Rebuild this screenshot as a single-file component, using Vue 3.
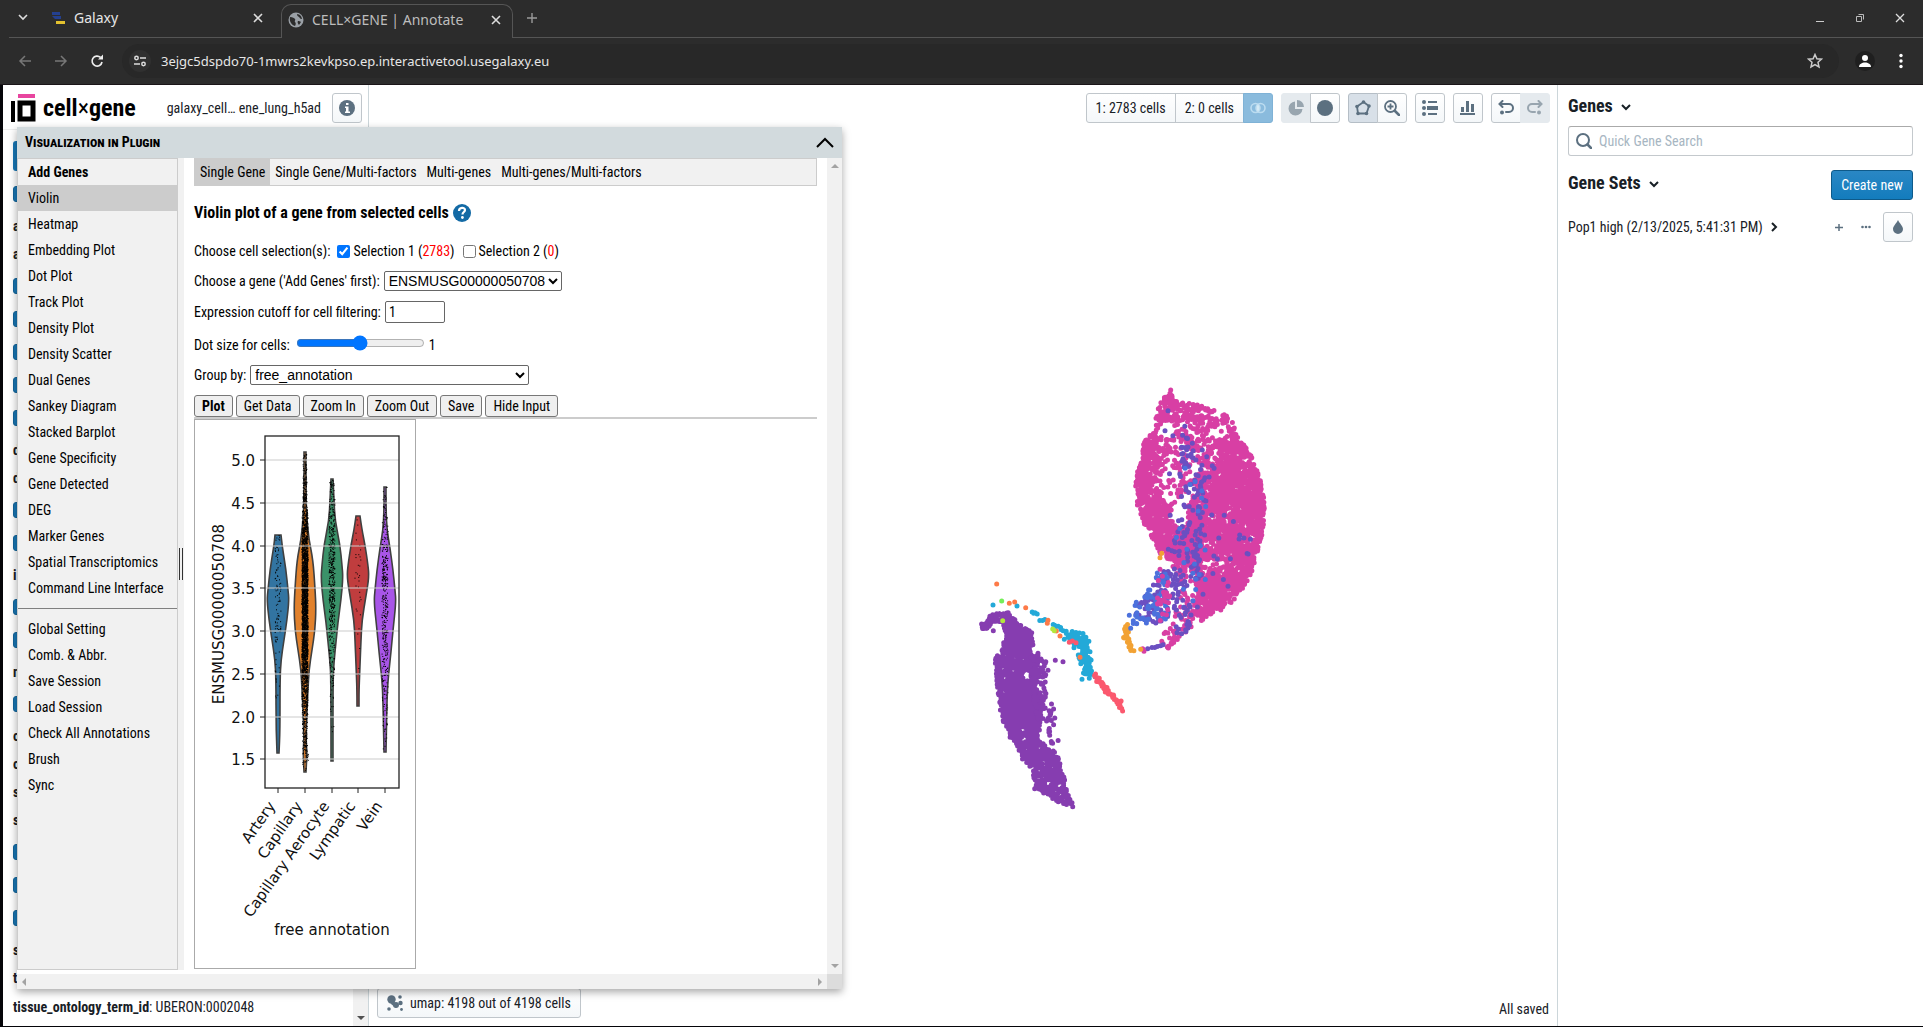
<script setup>
import { ref } from 'vue'

const plugins = [
  'Violin', 'Heatmap', 'Embedding Plot', 'Dot Plot', 'Track Plot', 'Density Plot', 'Density Scatter',
  'Dual Genes', 'Sankey Diagram', 'Stacked Barplot', 'Gene Specificity', 'Gene Detected', 'DEG',
  'Marker Genes', 'Spatial Transcriptomics', 'Command Line Interface'
]
const settings = ['Global Setting', 'Comb. & Abbr.', 'Save Session', 'Load Session', 'Check All Annotations', 'Brush', 'Sync']
const tabs = ['Single Gene', 'Single Gene/Multi-factors', 'Multi-genes', 'Multi-genes/Multi-factors']
const actions = ['Plot', 'Get Data', 'Zoom In', 'Zoom Out', 'Save', 'Hide Input']

// category rows of the left sidebar: a number is a run of tick boxes, an array a run of plain names
const categories = [1, ['a', 'a'], 5, ['d', 'd'], 2, ['i'], 2, ['n'], 1, ['o', 'o', 's', 's'], 3, ['s', 't']]

const sel1 = ref(true)
const sel2 = ref(false)
const cutoff = ref('1')
const dotSize = ref(1)
const search = ref('')

function generator(seed) {
  let a = seed
  return () => {
    a = (a + 0x6d2b79f5) | 0
    let t = Math.imul(a ^ (a >>> 15), 1 | a)
    t = (t + Math.imul(t ^ (t >>> 7), 61 | t)) ^ t
    return ((t ^ (t >>> 14)) >>> 0) / 4294967296
  }
}
const rnd = generator(20250213)
const gauss = () => rnd() + rnd() + rnd() - 1.5

// ---- violin plot ----
const ticks = [5, 4.5, 4, 3.5, 3, 2.5, 2, 1.5]
const ty = (v) => Math.round(40 + (5 - v) * 85.5)
const groups = [
  { name: 'Artery', x: 83, fill: '#3274a1', n: 120, mid: 178, sd: 62, shape: [[115, 3], [125, 4], [150, 8], [170, 10], [180, 11], [200, 9], [220, 6], [240, 3], [260, 2], [310, 2], [333, 1]] },
  { name: 'Capillary', x: 110, fill: '#e1812c', n: 3000, mid: 186, sd: 84, shape: [[32, 1], [80, 1], [100, 2], [120, 4], [140, 8], [168, 10], [188, 11], [210, 10], [230, 7], [250, 4], [270, 3], [290, 2], [320, 1], [332, 2], [352, 1]] },
  { name: 'Capillary Aerocyte', x: 137, fill: '#3a9269', n: 560, mid: 155, sd: 80, shape: [[59, 1], [80, 2], [100, 3], [125, 8], [145, 10], [158, 11], [180, 9], [202, 6], [222, 4], [242, 2], [260, 1], [341, 1]] },
  { name: 'Lympatic', x: 163, fill: '#c03d3e', n: 45, mid: 155, sd: 70, shape: [[96, 2], [110, 4], [125, 7], [145, 10], [157, 11], [176, 8], [200, 4], [220, 3], [245, 2], [270, 1], [286, 1]] },
  { name: 'Vein', x: 190, fill: '#a855e8', n: 420, mid: 185, sd: 85, shape: [[67, 1], [90, 1], [110, 2], [128, 5], [150, 8], [170, 10], [182, 11], [210, 8], [232, 6], [260, 3], [280, 2], [332, 1]] }
]
function half(shape, y) {
  for (let i = 1; i < shape.length; i++) {
    const [y0, w0] = shape[i - 1]
    const [y1, w1] = shape[i]
    if (y <= y1) return w0 + ((w1 - w0) * (y - y0)) / (y1 - y0)
  }
  return 1
}
const violins = groups.map((g) => {
  const edge = (s) => g.shape.map(([y, w]) => [g.x + s * w, y])
  const run = (pts) => {
    let d = ''
    for (let i = 1; i < pts.length - 1; i++) {
      d += `Q${pts[i][0]} ${pts[i][1]} ${(pts[i][0] + pts[i + 1][0]) / 2} ${(pts[i][1] + pts[i + 1][1]) / 2}`
    }
    const e = pts[pts.length - 1]
    return d + `L${e[0]} ${e[1]}`
  }
  const r = edge(1)
  const l = edge(-1).reverse()
  let dots = ''
  const lo = g.shape[0][0]
  const hi = g.shape[g.shape.length - 1][0]
  for (let i = 0; i < g.n; i++) {
    const y = g.mid + gauss() * g.sd * 1.5
    if (y < lo || y > hi) continue
    const w = Math.min(3, half(g.shape, y) + 1)
    dots += `M${(g.x - 0.5 + (rnd() * 2 - 1) * w).toFixed(1)} ${y.toFixed(1)}h1`
  }
  if (g.name === 'Capillary') for (let i = 0; i < 40; i++) dots += `M${(g.x + (rnd() * 2 - 1) * 3).toFixed(1)} ${(310 + rnd() * 34).toFixed(1)}h1`
  return { ...g, d: `M${r[0][0]} ${r[0][1]}${run(r)}L${l[0][0]} ${l[0][1]}${run(l)}Z`, dots }
})

// ---- embedding: cells drawn as small round dots, one path for each colour ----
const PINK = '#d83fa4'
const INDIGO = '#6b4fc1'
const BLUE = '#4c71dc'
const ORANGE = '#f2a234'
const PURPLE = '#863db0'
const CYAN = '#23a9d8'
const RED = '#fb586e'
const CORAL = '#fd7a48'
const layers = []
function layer(color) {
  const l = { color, d: '' }
  layers.push(l)
  return l
}
const put = (l, x, y) => { l.d += `M${x.toFixed(1)} ${y.toFixed(1)}h0` }
function inside(p, x, y) {
  let c = false
  for (let i = 0, j = p.length - 1; i < p.length; j = i++) {
    if (p[i][1] > y !== p[j][1] > y && x < ((p[j][0] - p[i][0]) * (y - p[i][1])) / (p[j][1] - p[i][1]) + p[i][0]) c = !c
  }
  return c
}
function fill(color, poly, n, keep = () => 1) {
  const l = layer(color)
  const xs = poly.map((p) => p[0])
  const ys = poly.map((p) => p[1])
  const x0 = Math.min(...xs), x1 = Math.max(...xs), y0 = Math.min(...ys), y1 = Math.max(...ys)
  let k = 0
  for (let t = 0; k < n && t < n * 20; t++) {
    const x = x0 + rnd() * (x1 - x0)
    const y = y0 + rnd() * (y1 - y0)
    if (!inside(poly, x, y) || rnd() > keep(x, y)) continue
    put(l, x, y)
    k++
  }
}
function trail(color, pts, step, spread) {
  const l = layer(color)
  for (let i = 1; i < pts.length; i++) {
    const [ax, ay] = pts[i - 1]
    const [bx, by] = pts[i]
    const n = Math.max(1, Math.round(Math.hypot(bx - ax, by - ay) / step))
    for (let k = 0; k < n; k++) put(l, ax + ((bx - ax) * k) / n + gauss() * spread, ay + ((by - ay) * k) / n + gauss() * spread)
  }
}
const dotsAt = (color, pts) => { const l = layer(color); pts.forEach(([x, y]) => put(l, x, y)) }
const at = (ox, oy, pts) => pts.map(([x, y]) => [ox + x / 3, oy + y / 3])
const east = (pts) => at(731, 285, pts)
const west = (pts) => at(591, 475, pts)
const near = (x, y, cx, cy, rx, ry) => ((x - cx) / rx) ** 2 + ((y - cy) / ry) ** 2 < 1

fill(PINK, east([[212, 60], [222, 92], [250, 90], [290, 98], [330, 118], [375, 130], [402, 160], [414, 205], [436, 224], [459, 270], [480, 325], [494, 400], [490, 480], [477, 535], [459, 600], [428, 658], [388, 708], [332, 736], [268, 776], [232, 812], [205, 832], [170, 822], [200, 780], [235, 700], [235, 640], [215, 580], [180, 550], [160, 510], [134, 464], [110, 400], [106, 330], [122, 270], [132, 210], [162, 185], [168, 130], [186, 88]]), 3300, (px, py) => {
  const x = (px - 731) * 3
  const y = (py - 285) * 3
  if (near(x, y, 240, 430, 24, 44) || near(x, y, 200, 178, 24, 24) || near(x, y, 364, 184, 24, 22)) return 0
  if (near(x, y, 340, 582, 44, 12)) return 0.08
  if (near(x, y, 235, 320, 58, 100)) return 0.18
  if (near(x, y, 265, 230, 95, 90)) return 0.36
  if (x < 290 && y > 600) return 0.25
  if (y > 740) return 0.5
  if (y < 200) return 0.55
  return 1
})
dotsAt(PINK, east([[212, 60], [210, 70], [207, 78], [216, 82], [200, 84], [364, 184], [388, 184], [240, 122], [236, 380], [224, 397], [215, 402]]))
fill(INDIGO, east([[245, 190], [270, 190], [300, 290], [325, 340], [320, 400], [300, 500], [300, 620], [250, 700], [220, 650], [215, 500], [250, 430], [235, 300]]), 105)
trail(INDIGO, east([[252, 280], [256, 298]]), 1, 3)
fill(INDIGO, east([[205, 120], [350, 225], [360, 400], [460, 460], [450, 590], [400, 640], [340, 700], [230, 740], [200, 500], [210, 250]]), 52)
fill(INDIGO, east([[185, 595], [225, 600], [245, 660], [215, 740], [170, 760], [130, 750], [95, 745], [120, 690], [160, 640]]), 80)
fill(BLUE, east([[180, 590], [205, 600], [200, 660], [215, 720], [185, 765], [125, 765], [90, 770], [88, 720], [115, 690], [150, 640]]), 70)
fill(BLUE, east([[225, 270], [330, 290], [350, 430], [320, 680], [240, 790], [200, 500], [255, 450]]), 24)
fill(INDIGO, east([[255, 700], [300, 690], [270, 780], [205, 830], [190, 790]]), 20)
fill(PINK, east([[175, 600], [210, 640], [215, 760], [175, 790], [165, 690]]), 22)
trail(INDIGO, east([[145, 836], [165, 832], [200, 824]]), 3, 1)
dotsAt(PINK, east([[128, 836], [132, 844], [180, 598], [205, 834]]))
dotsAt(INDIGO, east([[195, 182], [204, 122]]))
trail(ORANGE, east([[82, 768], [76, 790], [80, 815], [92, 834], [105, 838]]), 1, 3)
dotsAt(ORANGE, east([[180, 563], [185, 550], [122, 838]]))
dotsAt(BLUE, east([[88, 736], [92, 775], [100, 752]]))

fill(PURPLE, west([[64, 210], [60, 202], [82, 185], [98, 158], [145, 156], [172, 185], [192, 203], [216, 215], [219, 260], [214, 290], [236, 278], [233, 330], [224, 380], [240, 420], [240, 500], [234, 540], [264, 560], [290, 578], [305, 620], [318, 680], [338, 740], [290, 724], [265, 707], [224, 692], [218, 640], [184, 592], [169, 550], [147, 530], [124, 470], [114, 400], [108, 340], [101, 300], [127, 270], [137, 215], [122, 185], [98, 188], [80, 206]]), 1750, (px, py) => {
  const x = (px - 591) * 3
  const y = (py - 475) * 3
  if (near(x, y, 200, 345, 12, 14) || near(x, y, 190, 540, 14, 6)) return 0
  return y > 560 ? 0.7 : 1
})
trail(PURPLE, west([[64, 203], [80, 195], [98, 170]]), 1, 3)
dotsAt(PURPLE, west([[328, 722], [334, 732], [338, 740], [336, 728]]))
fill(PURPLE, west([[212, 275], [260, 305], [255, 385], [280, 440], [294, 490], [298, 550], [262, 550], [262, 490], [230, 480], [215, 400]]), 115)
dotsAt(PURPLE, west([[286, 301], [309, 305], [100, 212], [365, 300], [252, 307], [264, 331]]))
trail(CYAN, west([[215, 155], [238, 164]]), 2, 1)
trail(CYAN, west([[242, 180], [258, 182]]), 2, 1)
trail(CYAN, west([[278, 192], [300, 204], [312, 216]]), 2, 1)
trail(CYAN, west([[322, 226], [345, 232], [365, 245], [372, 280], [380, 310], [384, 340]]), 0.4, 6)
dotsAt(CYAN, west([[99, 135], [171, 138], [342, 263], [366, 358], [388, 355], [405, 350], [413, 362], [390, 275]]))
trail(RED, west([[402, 346], [420, 366], [440, 392], [462, 416], [480, 434], [488, 450]]), 1, 2)
dotsAt(RED, west([[328, 247], [337, 243], [348, 248]]))
dotsAt(CORAL, west([[110, 72], [148, 130], [164, 126], [197, 143], [264, 181], [262, 190], [289, 213], [300, 228], [360, 292]]))
dotsAt('#74ee58', west([[125, 123]]))
dotsAt('#b3e63c', west([[128, 182], [278, 207], [283, 212]]))
</script>

<template>
  <div class="window">
    <header class="chrome">
      <div class="tabstrip">
        <button class="bare tabsearch" aria-label="Search tabs"><svg width="10" height="10" viewBox="0 0 10 10"><path d="M1 3l4 4 4-4" class="w2" /></svg></button>
        <div class="btab">
          <svg width="14" height="14" viewBox="0 0 14 14"><path d="M1 1h8v3H1zM1 5h9v3H4z" fill="#24408f" /><path d="M5 10h9v3H5z" fill="#e3c12f" /></svg>
          <span class="btitle">Galaxy</span>
          <button class="bare" aria-label="Close tab"><svg width="10" height="10" viewBox="0 0 10 10"><path d="M1 1l8 8M9 1l-8 8" class="w2" /></svg></button>
        </div>
        <div class="btab current">
          <svg width="16" height="16" viewBox="0 0 16 16"><circle cx="8" cy="8" r="7.500" fill="#9aa0a6" /><path d="M2 5c3 0 4 1 5 2s-1 2 0 3 1 2 0 4c-3-1-6-4-5-9zM9 2c0 2 1 2 2 3s1 2 3 2c0-2-2-5-5-5zM10 9c1 0 2 0 3 1l-2 3c-1-1-2-3-1-4z" fill="#2c2c2c" /></svg>
          <span class="btitle">CELL×GENE | Annotate</span>
          <button class="bare" aria-label="Close tab"><svg width="10" height="10" viewBox="0 0 10 10"><path d="M1 1l8 8M9 1l-8 8" class="w2" /></svg></button>
        </div>
        <button class="bare newtab" aria-label="New tab"><svg width="12" height="12" viewBox="0 0 12 12"><path d="M6 1v10M1 6h10" stroke="#9a9a9a" stroke-width="1.4" /></svg></button>
        <div class="winbtns">
          <button class="bare" aria-label="Minimise"><svg width="10" height="10" viewBox="0 0 10 10"><path d="M1 8.500h8" stroke="#ccc" /></svg></button>
          <button class="bare" aria-label="Restore"><svg width="10" height="10" viewBox="0 0 10 10"><path d="M1.500 3.500h5v5h-5zM3.500 1.500h5v5" fill="none" stroke="#bbb" /></svg></button>
          <button class="bare" aria-label="Close window"><svg width="10" height="10" viewBox="0 0 10 10"><path d="M1 1l8 8M9 1l-8 8" stroke="#ddd" stroke-width="1.300" /></svg></button>
        </div>
      </div>
      <div class="toolbar">
        <button class="bare" aria-label="Back"><svg width="14" height="14" viewBox="0 0 14 14"><path d="M13 7H2M7 2L2 7l5 5" fill="none" stroke="#777" stroke-width="1.500" /></svg></button>
        <button class="bare" aria-label="Forward"><svg width="14" height="14" viewBox="0 0 14 14"><path d="M1 7h11M7 2l5 5-5 5" fill="none" stroke="#777" stroke-width="1.500" /></svg></button>
        <button class="bare" aria-label="Reload"><svg width="14" height="14" viewBox="0 0 14 14"><path d="M12 8a5 5 0 1 1-1.500-4.600" fill="none" stroke="#eee" stroke-width="1.700" /><path d="M8 5.500h5v-5z" fill="#eee" /></svg></button>
        <div class="omnibox">
          <span class="tune"><svg width="14" height="14" viewBox="0 0 14 14" fill="none" stroke="#ddd" stroke-width="1.500"><circle cx="3.500" cy="4" r="1.700" /><path d="M7 4h6M1 10h6" /><circle cx="10.500" cy="10" r="1.700" /></svg></span>
          <span class="url">3ejgc5dspdo70-1mwrs2kevkpso.ep.interactivetool.usegalaxy.eu</span>
          <svg width="16" height="16" viewBox="0 0 16 16"><path d="M8 1.500l1.900 4.300 4.600.4-3.500 3.100 1 4.600-4-2.400-4 2.400 1-4.600L1.500 6.200l4.600-.4z" fill="none" stroke="#ccc" stroke-width="1.500" /></svg>
        </div>
        <button class="bare avatar" aria-label="Profile"><svg width="20" height="20" viewBox="0 0 20 20"><circle cx="10" cy="10" r="10" fill="#1f1f1f" /><circle cx="10" cy="7" r="3" fill="#fff" /><path d="M4 16c0-6 12-6 12 0z" fill="#fff" /></svg></button>
        <button class="bare" aria-label="Menu"><svg width="4" height="16" viewBox="0 0 4 16" fill="#fff"><circle cx="2" cy="2.500" r="1.700" /><circle cx="2" cy="8" r="1.700" /><circle cx="2" cy="13.500" r="1.700" /></svg></button>
      </div>
    </header>

    <div class="page">
      <aside class="left">
        <div class="brand">
          <svg width="28" height="28" viewBox="0 0 28 28"><path d="M7 0h17v4H7z" fill="#e8459f" /><path d="M0 7h4v21H0z" /><path d="M9 9h13v16H9z" fill="none" stroke="#000" stroke-width="5" /></svg>
          <strong class="logo">cell<span class="times">×</span>gene</strong>
          <span class="dataset">galaxy_cell… ene_lung_h5ad</span>
          <button class="bp" aria-label="Info"><svg width="16" height="16" viewBox="0 0 16 16"><circle cx="8" cy="8" r="8" fill="#5c7080" /><path d="M7 3h2.500v2H7zM6 6.500h3.500v5H11V13H6v-1.500h1v-3.500H6z" fill="#fff" /></svg></button>
        </div>
        <div class="cats">
          <div class="catbtn"></div>
          <template v-for="(run, i) in categories" :key="i">
            <div v-if="Array.isArray(run)" class="names"><div v-for="(n, k) in run" :key="k">{{ n }}</div></div>
            <template v-else><div v-for="k in run" :key="k" class="catrow"><i></i></div></template>
          </template>
          <div class="last"><b>tissue_ontology_term_id</b>: UBERON:0002048</div>
        </div>
        <div class="lscroll"><i class="tri down dark"></i></div>
      </aside>

      <main class="center">
        <svg class="embedding" viewBox="0 0 1188 941" role="img" aria-label="umap">
          <path v-for="(l, i) in layers" :key="i" :d="l.d" :stroke="l.color" stroke-width="5" stroke-linecap="round" fill="none" />
        </svg>
        <div class="tools">
          <div class="grp">
            <button class="bp txt">1: 2783 cells</button><button class="bp txt">2: 0 cells</button>
            <button class="bp blue" aria-label="Differential expression"><svg width="16" height="16" viewBox="0 0 16 16"><circle cx="5.500" cy="8" r="4.500" fill="none" stroke="#bcdcf0" stroke-width="1.600" /><circle cx="10.500" cy="8" r="4.500" fill="none" stroke="#bcdcf0" stroke-width="1.600" /><path d="M8 4.200c2 2 2 5.600 0 7.600-2-2-2-5.600 0-7.600z" fill="#d5eaf6" /></svg></button>
          </div>
          <div class="grp">
            <button class="bp off" aria-label="Subset"><svg width="16" height="16" viewBox="0 0 16 16" fill="#98a5af"><path d="M7 1.500a7 7 0 1 0 7.500 7.500H7z" /><path d="M9 0a7 7 0 0 1 7 7H9z" /></svg></button>
            <button class="bp" aria-label="Undo subset"><svg width="16" height="16" viewBox="0 0 16 16"><circle cx="8" cy="8" r="8" fill="#5c7080" /></svg></button>
          </div>
          <div class="grp">
            <button class="bp on" aria-label="Lasso"><svg width="16" height="16" viewBox="0 0 16 16"><path d="M8.500 2L14 6l-2.500 7.500H3L2 6.500z" fill="none" stroke="#5c7080" stroke-width="1.800" /><g fill="#5c7080"><circle cx="8.500" cy="2" r="1.800" /><circle cx="14" cy="6" r="1.800" /><circle cx="11.500" cy="13.500" r="1.800" /><circle cx="3" cy="13.500" r="1.800" /><circle cx="2" cy="6.500" r="1.800" /></g></svg></button>
            <button class="bp" aria-label="Zoom"><svg width="16" height="16" viewBox="0 0 16 16" fill="none" stroke="#5c7080" stroke-width="1.800"><circle cx="6.500" cy="6.500" r="5.500" /><path d="M11 11l4 4" stroke-width="2.500" stroke-linecap="round" /><path d="M6.500 3.500v6M3.500 6.500h6" /></svg></button>
          </div>
          <button class="bp" aria-label="Layout"><svg width="16" height="16" viewBox="0 0 16 16" fill="#5c7080"><circle cx="2" cy="2" r="2" /><circle cx="2" cy="8" r="2" /><circle cx="2" cy="14" r="2" /><path d="M6 1h9v2H6zM5 6h11v4H5zM6 13h9v2H6z" /></svg></button>
          <button class="bp" aria-label="Statistics"><svg width="16" height="16" viewBox="0 0 16 16" fill="#5c7080"><path d="M0 13h15v2H0zM1 7h3v5H1zM6 1h3v11H6zM11 4h3v8h-3z" /></svg></button>
          <div class="grp">
            <button class="bp" aria-label="Undo"><svg width="16" height="16" viewBox="0 0 16 16"><path d="M4.500 1L1.500 4l3 3M2 4h9a4 4 0 0 1 0 8H8" fill="none" stroke="#5c7080" stroke-width="2" stroke-linecap="round" /><circle cx="4" cy="12.500" r="2" fill="#5c7080" /></svg></button>
            <button class="bp off" aria-label="Redo"><svg width="16" height="16" viewBox="0 0 16 16"><path d="M11.500 1l3 3-3 3M14 4H5a4 4 0 0 0 0 8h3" fill="none" stroke="#98a5af" stroke-width="2" stroke-linecap="round" /><circle cx="12" cy="12.500" r="2" fill="#98a5af" /></svg></button>
          </div>
        </div>
        <div class="status">
          <button class="bp umap"><svg width="16" height="16" viewBox="0 0 16 16" fill="#5c7080"><circle cx="4.500" cy="4.500" r="4.200" /><path d="M5 5l6 5-2 3-5-4z" /><circle cx="9" cy="10" r="3" /><circle cx="13" cy="2" r="1.800" /><circle cx="13.500" cy="8" r="2.200" /><circle cx="2" cy="14" r="1.800" /><circle cx="14.500" cy="14.500" r="1.400" /></svg>umap: 4198 out of 4198 cells</button>
          <span>All saved</span>
        </div>
      </main>

      <aside class="right">
        <h2>Genes <svg width="12" height="12" viewBox="0 0 12 12"><path d="M2 4l4 4 4-4" class="chev" /></svg></h2>
        <label class="search">
          <svg width="16" height="16" viewBox="0 0 16 16" fill="none" stroke="#5c7080" stroke-width="2"><circle cx="7" cy="7" r="6" /><path d="M11.500 11.500l3.500 3.500" stroke-width="2.500" stroke-linecap="round" /></svg>
          <input v-model="search" type="text" placeholder="Quick Gene Search" aria-label="Quick Gene Search" />
        </label>
        <div class="setshead">
          <h2>Gene Sets <svg width="12" height="12" viewBox="0 0 12 12"><path d="M2 4l4 4 4-4" class="chev" /></svg></h2>
          <button class="create">Create new</button>
        </div>
        <div class="setrow">
          <span>Pop1 high (2/13/2025, 5:41:31 PM)</span>
          <svg width="12" height="12" viewBox="0 0 12 12"><path d="M4 2l4 4-4 4" class="chev" /></svg>
          <span class="grow"></span>
          <button class="bare small" aria-label="Add gene"><svg width="10" height="10" viewBox="0 0 10 10"><path d="M5 2v7M1 5.500h8" stroke="#5c7080" stroke-width="1.500" /></svg></button>
          <button class="bare small" aria-label="More"><svg width="10" height="10" viewBox="0 0 10 10" fill="#5c7080"><circle cx="1.500" cy="5" r="1.300" /><circle cx="5" cy="5" r="1.300" /><circle cx="8.500" cy="5" r="1.300" /></svg></button>
          <button class="bp" aria-label="Colour by"><svg width="16" height="16" viewBox="0 0 16 16"><path d="M8 1c2 4 5 6 5 9a5 5 0 0 1-10 0c0-3 3-5 5-9z" fill="#5c7080" /></svg></button>
        </div>
      </aside>

      <section class="panel">
        <div class="phead">
          <strong>Visualization in Plugin</strong>
          <button class="bare" aria-label="Collapse"><svg width="18" height="12" viewBox="0 0 18 12"><path d="M1 10l8-8 8 8" fill="none" stroke="#000" stroke-width="2" /></svg></button>
        </div>
        <div class="pbody">
          <nav class="menu">
            <a href="#" class="add">Add Genes</a>
            <a v-for="p in plugins" :key="p" href="#" :class="{ active: p === 'Violin' }">{{ p }}</a>
            <hr />
            <a v-for="s in settings" :key="s" href="#">{{ s }}</a>
          </nav>
          <div class="splitter"><i></i></div>
          <div class="content">
            <nav class="tabs"><a v-for="(t, i) in tabs" :key="t" href="#" :class="{ active: i === 0 }">{{ t }}</a></nav>
            <h3>Violin plot of a gene from selected cells
              <svg width="18" height="18" viewBox="0 0 18 18"><circle cx="9" cy="9" r="9" fill="#136aa5" /><path d="M6 7c0-4 6-4 6-1 0 2-2.500 2-2.500 4.500" fill="none" stroke="#fff" stroke-width="2.200" /><circle cx="9.400" cy="13.500" r="1.400" fill="#fff" /></svg>
            </h3>
            <div class="row r30">
              <span class="lead">Choose cell selection(s):</span>
              <label class="tick"><input v-model="sel1" type="checkbox" />Selection 1 (<em>2783</em>)</label>
              <label class="tick"><input v-model="sel2" type="checkbox" />Selection 2 (<em>0</em>)</label>
            </div>
            <div class="row r30">
              <label for="gene">Choose a gene ('Add Genes' first):</label>
              <select id="gene"><option>ENSMUSG00000050708</option></select>
            </div>
            <div class="row r32">
              <label for="cut">Expression cutoff for cell filtering:</label>
              <input id="cut" v-model="cutoff" type="text" />
            </div>
            <div class="row r34">
              <label for="dot">Dot size for cells:</label>
              <input id="dot" v-model="dotSize" type="range" min="0" max="2" step="1" /><span>1</span>
            </div>
            <div class="row r26">
              <label for="by">Group by:</label>
              <select id="by" class="wide"><option>free_annotation</option></select>
            </div>
            <div class="actions"><button v-for="(a, i) in actions" :key="a" :class="{ bold: i === 0 }">{{ a }}</button></div>
            <figure class="plot">
              <svg width="220" height="548" viewBox="0 0 220 548">
                <g v-for="v in violins" :key="v.name">
                  <path :d="v.d" :fill="v.fill" stroke="#404040" stroke-width="1.600" />
                  <path :d="v.dots" stroke="#000" stroke-width="1" />
                </g>
                <path v-for="t in ticks" :key="t" :d="`M70 ${ty(t)}H204`" stroke="#ccc" stroke-width="1.200" />
                <rect x="70" y="16" width="134" height="352" fill="none" stroke="#222" stroke-width="1.300" />
                <g v-for="t in ticks" :key="t">
                  <path :d="`M65 ${ty(t)}h5`" stroke="#222" />
                  <text x="60" :y="ty(t) + 6" text-anchor="end">{{ t.toFixed(1) }}</text>
                </g>
                <g v-for="v in violins" :key="v.name">
                  <path :d="`M${v.x} 368v5`" stroke="#222" />
                  <text :transform="`translate(${v.x - 2} 386) rotate(-55)`" text-anchor="end">{{ v.name }}</text>
                </g>
                <text transform="translate(29 194) rotate(-90)" text-anchor="middle">ENSMUSG00000050708</text>
                <text x="137" y="515" text-anchor="middle">free annotation</text>
              </svg>
            </figure>
          </div>
          <div class="vscroll"><i class="tri up"></i><i class="tri down"></i></div>
        </div>
        <div class="hscroll"><i class="tri toleft"></i><i class="tri toright"></i><span class="corner"></span></div>
      </section>
    </div>
  </div>
</template>

<style>
body { margin: 0; background: #0b0b0f; }
</style>

<style scoped>
* { box-sizing: border-box; }
.window { height: 100vh; display: flex; flex-direction: column; padding: 0 0 1px 3px; background: #050509; overflow: hidden; font: 14px/18px "Roboto Condensed", "Liberation Sans Narrow", Roboto, sans-serif; color: #182026; }
.bare { background: none; border: 0; padding: 0; display: flex; align-items: center; justify-content: center; }
svg { display: block; flex: none; }
.w2 { fill: none; stroke: #ddd; stroke-width: 1.600; }
.chev { fill: none; stroke: #182026; stroke-width: 2; }
.chrome { flex: none; background: #2c2c2c; font: 14px/20px "Noto Sans", sans-serif; color: #e6e6e6; margin-left: -3px; padding-left: 3px; border-bottom: 1px solid #1a1518; }
.tabstrip { height: 38px; display: flex; align-items: flex-end; border-bottom: 1px solid #555; margin-left: 6px; }
.tabsearch { width: 28px; height: 38px; padding-bottom: 2px; }
.btab { height: 34px; display: flex; align-items: center; width: 244px; padding: 0 18px 4px 14px; gap: 9px; }
.btitle { flex: 1; white-space: nowrap; }
.btab.current { width: 232px; margin-bottom: -1px; border: 1px solid #555; border-bottom: 0; border-radius: 10px 10px 0 0; background: #2c2c2c; padding: 0 11px 4px 6px; color: #bdbdbd; gap: 8px; }
.newtab { width: 38px; height: 38px; }
.winbtns { margin-left: auto; display: flex; gap: 30px; height: 38px; padding-right: 18px; }
.toolbar { height: 46px; display: flex; align-items: center; gap: 22px; padding: 0 20px 0 15px; }
.omnibox { flex: 1; height: 34px; border-radius: 17px; background: #282828; display: flex; align-items: center; padding: 0 16px 0 7px; margin-right: 2px; margin-left: -4px; }
.tune { width: 22px; height: 22px; border-radius: 11px; background: #303030; display: flex; align-items: center; justify-content: center; }
.url { flex: 1; padding-left: 10px; font-size: 13px; }
.avatar { margin-left: -8px; margin-right: 2px; }

.page { flex: 1; min-height: 0; display: flex; background: #fff; position: relative; }
.left { width: 366px; border-right: 1px solid #ccd6da; display: flex; flex-direction: column; position: relative; overflow: hidden; }
.brand { height: 45px; flex: none; display: flex; align-items: center; padding: 8px 6px 6px 8px; border-bottom: 1px solid #eee; }
.logo { font-size: 24px; line-height: 30px; color: #000; margin-left: 4px; }
.times { font-weight: 400; }
.dataset { margin-left: auto; margin-right: 11px; white-space: nowrap; }
.bp { height: 30px; min-width: 30px; padding: 0 6px; display: flex; align-items: center; justify-content: center; border: 1px solid #c0c6cb; border-radius: 3px; background: linear-gradient(#fff, #f4f7f9); font: inherit; color: #182026; white-space: nowrap; }
.cats { padding: 11px 0 0 10px; }
.catbtn { width: 60px; height: 30px; background: #1876b4; border-radius: 3px; margin-bottom: 6px; }
.catrow { height: 33px; display: flex; align-items: center; }
.catrow i { width: 16px; height: 16px; border-radius: 3px; background: #1876b4; border: 1px solid #14659a; }
.names { margin: 2px 0 1px; font-weight: 700; }
.names div { height: 28px; line-height: 28px; }
.last { line-height: 28px; white-space: nowrap; }
.lscroll { position: absolute; right: 0; top: 45px; bottom: 0; width: 15px; background: #f1f1f1; display: flex; align-items: flex-end; justify-content: center; padding-bottom: 6px; }

.center { flex: 1; min-width: 0; position: relative; display: flex; flex-direction: column; justify-content: space-between; }
.embedding { position: absolute; inset: 0; width: 100%; height: 100%; }
.tools { display: flex; justify-content: flex-end; gap: 8px; padding: 8px 7px; position: relative; }
.grp { display: flex; }
.grp .bp + .bp { margin-left: -1px; border-radius: 0 3px 3px 0; }
.grp .bp:first-child { border-radius: 3px 0 0 3px; }
.grp .bp.txt { padding: 0 9px; }
.grp .bp.txt + .txt { border-radius: 0; }
.bp.off { background: #e5eaee; border-color: #e5eaee; }
.grp .bp.off + .bp { margin-left: -1px; }
.bp.on { background: #d8e0e8; border-color: #b5bec6; }
.bp.blue { background: #8abbdd; border-color: #7fb2d6; }
.status { display: flex; justify-content: space-between; align-items: flex-end; padding: 0 8px; position: relative; }
.status .umap { padding: 0 9px; gap: 7px; margin-bottom: 8px; }
.status span { margin-bottom: 8px; }

.right { width: 366px; border-left: 1px solid #ccd6da; padding: 8px 10px; }
h2 { margin: 0; font-size: 18px; line-height: 26px; display: flex; align-items: center; gap: 7px; height: 26px; }
h2 svg { margin-top: 2px; }
.search { display: flex; align-items: center; gap: 7px; height: 30px; margin-top: 7px; border: 1px solid #c4c9cd; border-top-color: #aaa; border-radius: 3px; padding: 0 7px; }
.search input { flex: 1; border: 0; outline: 0; padding: 0; font: inherit; background: none; }
.search input::placeholder { color: #a7b6c2; }
.setshead { display: flex; justify-content: space-between; margin-top: 14px; }
.create { height: 30px; width: 82px; padding: 0; border: 1px solid #0e5a8a; border-radius: 3px; background: linear-gradient(#2a87c4, #137cbd); color: #fff; font: inherit; }
.setrow { display: flex; align-items: center; margin-top: 12px; gap: 5px; }
.grow { flex: 1; }
.small { width: 16px; height: 16px; }
.setrow .small + .small { margin-left: 6px; }
.setrow .bp { margin-left: 4px; }

.panel { position: absolute; left: 14px; top: 42px; width: 825px; bottom: 37px; background: #fff; box-shadow: 0 3px 8px rgba(0, 0, 0, .35); display: flex; flex-direction: column; color: #000; }
.phead { height: 31px; flex: none; background: #d2dadd; display: flex; align-items: center; justify-content: space-between; padding: 0 8px; font-variant: small-caps; }
.phead strong { margin-top: -2px; }
.pbody { flex: 1; min-height: 0; display: flex; }
.menu { width: 161px; margin-bottom: 4px; border: 1px solid #ccc; background: #f1f1f1; display: flex; flex-direction: column; }
.menu a { height: 26px; line-height: 26px; padding-left: 10px; color: #000; text-decoration: none; white-space: nowrap; }
.menu a.active, .tabs a.active { background: #ccc; }
.menu .add { font-weight: 700; }
.menu hr { width: 100%; margin: 7px 0; border: 0; border-top: 1px solid #808080; }
.splitter { width: 6px; background: #f1f1f1; margin-bottom: 4px; display: flex; align-items: center; justify-content: center; }
.splitter i { width: 4px; height: 32px; border: solid #333; border-width: 0 1px; }
.content { flex: 1; min-width: 0; padding: 0 10px; }
.tabs { height: 28px; border: 1px solid #ccc; background: #f1f1f1; display: flex; }
.tabs a { line-height: 26px; padding: 0 5px; color: #000; text-decoration: none; white-space: nowrap; }
h3 { margin: 11px 0 7px; height: 32px; display: flex; align-items: center; gap: 4px; font-size: 16px; line-height: 20px; }
.row { display: flex; align-items: center; gap: 4px; white-space: nowrap; }
.r26 { height: 26px; }
.r30 { height: 30px; }
.r32 { height: 32px; }
.r34 { height: 34px; }
.lead { margin-right: 3px; }
.tick { display: flex; align-items: center; margin-right: 4px; }
.tick input { width: 13px; height: 13px; margin: 0 3px 0 0; }
em { color: #f00; font-style: normal; }
.row select { height: 20px; width: 178px; padding: 0; border: 1px solid #666; border-radius: 2px; background: #fff; font: 14px "Liberation Sans", sans-serif; color: #000; }
.row select.wide { width: 279px; }
.row input[type="text"] { width: 60px; height: 22px; padding: 0 3px; border: 1px solid #666; border-radius: 2px; font: inherit; color: #000; }
.row input[type="range"] { width: 129px; height: 16px; margin: 0 0 4px 2px; }
.actions { display: flex; gap: 3px; margin-top: 7px; border-bottom: 2px solid #ccc; }
.actions button { height: 22px; padding: 0 7px; border: 1px solid #777; border-radius: 3px; background: #efefef; font: inherit; line-height: 18px; color: #000; white-space: nowrap; }
.actions .bold { font-weight: 700; }
.plot { margin: 0; width: 222px; border: 1px solid #aaa; }
.plot text { font: 15px "DejaVu Sans", sans-serif; fill: #111; }
.vscroll { width: 15px; background: #f1f1f1; display: flex; flex-direction: column; justify-content: space-between; align-items: center; padding: 6px 0; }
.hscroll { height: 15px; flex: none; background: #f1f1f1; display: flex; justify-content: space-between; align-items: center; padding-left: 5px; }
.corner { width: 15px; height: 15px; background: #dcdcdc; }
.hscroll .toright { margin-left: auto; margin-right: 5px; }
.tri { width: 0; height: 0; border: 4px solid transparent; }
.up { border-top: 0; border-bottom-color: #a3a3a3; }
.down { border-bottom: 0; border-top-color: #a3a3a3; }
.dark { border-top-color: #505050; }
.toleft { border-left: 0; border-right-color: #a3a3a3; }
.toright { border-right: 0; border-left-color: #a3a3a3; }
</style>
